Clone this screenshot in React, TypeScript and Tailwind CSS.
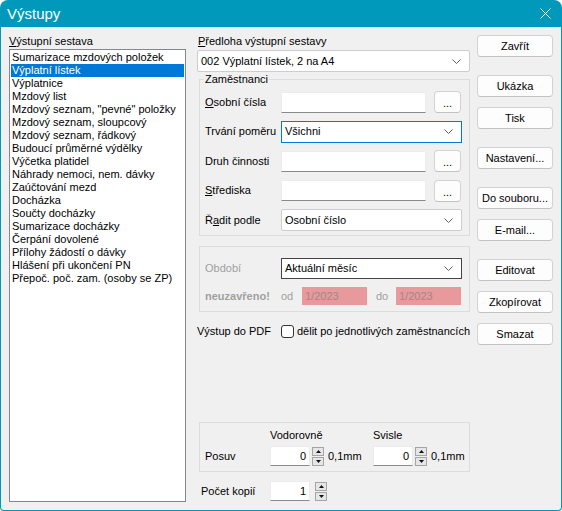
import React from "react";

const REPORTS = [
  "Sumarizace mzdových položek",
  "Výplatní lístek",
  "Výplatnice",
  "Mzdový list",
  'Mzdový seznam, "pevné" položky',
  "Mzdový seznam, sloupcový",
  "Mzdový seznam, řádkový",
  "Budoucí průměrné výdělky",
  "Výčetka platidel",
  "Náhrady nemoci, nem. dávky",
  "Zaúčtování mezd",
  "Docházka",
  "Součty docházky",
  "Sumarizace docházky",
  "Čerpání dovolené",
  "Přílohy žádostí o dávky",
  "Hlášení při ukončení PN",
  "Přepoč. poč. zam. (osoby se ZP)",
];

const BUTTONS = [
  { label: "Zavřít", cls: "mt-0" },
  { label: "Ukázka", cls: "mt-[18px]" },
  { label: "Tisk", cls: "mt-[10px]" },
  { label: "Nastavení...", cls: "mt-[18px]" },
  { label: "Do souboru...", cls: "mt-[18px]" },
  { label: "E-mail...", cls: "mt-[10px]" },
  { label: "Editovat", cls: "mt-[18px]" },
  { label: "Zkopírovat", cls: "mt-[10px]" },
  { label: "Smazat", cls: "mt-[10px]" },
];

function Chevron() {
  return (
    <svg width="9" height="5" viewBox="0 0 9 5" className="shrink-0">
      <path d="M0.5 0.5 L4.5 4.5 L8.5 0.5" fill="none" stroke="#5f5f5f" strokeWidth="1" />
    </svg>
  );
}

function Field() {
  return <div className="w-[145px] h-[21px] bg-white border border-[#ececec] border-b-[#8a8a8a]" />;
}

function Dots() {
  return (
    <div className="ml-[8px] w-[27px] h-[22px] bg-[#fdfdfd] border border-[#d3d3d3] border-b-[#c2c2c2] rounded-[4px] flex items-center justify-center leading-none pt-[3px]">
      ...
    </div>
  );
}

function Spinner({ cls }: { cls: string }) {
  return (
    <div className={"flex flex-col gap-[1px] " + cls}>
      <div className="w-[12px] h-[9px] border border-[#a5a5a5] bg-[#e6e6e6] flex items-center justify-center">
        <svg width="5" height="3" viewBox="0 0 5 3">
          <path d="M0 3 L2.5 0 L5 3 Z" fill="#111" />
        </svg>
      </div>
      <div className="w-[12px] h-[9px] border border-[#a5a5a5] bg-[#e6e6e6] flex items-center justify-center">
        <svg width="5" height="3" viewBox="0 0 5 3">
          <path d="M0 0 L2.5 3 L5 0 Z" fill="#111" />
        </svg>
      </div>
    </div>
  );
}

function NumBox({ value }: { value: string }) {
  return (
    <div className="w-[40px] h-[20px] bg-white border border-[#ececec] border-b-[#8a8a8a] flex items-center justify-end pr-[3px]">
      {value}
    </div>
  );
}

export default function App() {
  return (
    <div className="w-[562px] h-[511px] bg-[#0099bc] rounded-t-[8px] rounded-b-[4px] px-[1px] pb-[1px] flex flex-col overflow-hidden font-['Liberation_Sans',Arial,sans-serif] text-[11px] text-black">
      {/* title bar */}
      <div className="h-[27px] shrink-0 flex items-center justify-between pl-[6px] pr-[10px]">
        <span className="text-[15px] text-white leading-none">Výstupy</span>
        <svg width="11" height="11" viewBox="0 0 11 11">
          <path d="M0.5 0.5 L10.5 10.5 M10.5 0.5 L0.5 10.5" stroke="#fff" strokeWidth="1" />
        </svg>
      </div>

      <div className="flex-1 bg-[#f0f0f0] rounded-b-[3px] flex pt-[7px] pb-[8px] px-[8px]">
        {/* left: report list */}
        <div className="w-[177px] flex flex-col">
          <div className="h-[15px] leading-[15px]">
            <span className="underline">V</span>ýstupní sestava
          </div>
          <div className="flex-1 bg-white border border-[#828790] p-[1px]">
            {REPORTS.map((r, i) => (
              <div
                key={r}
                className={
                  i === 1
                    ? "h-[13px] leading-[13px] pl-[1px] whitespace-nowrap bg-[#0078d7] text-white"
                    : "h-[13px] leading-[13px] pl-[1px] whitespace-nowrap"
                }
              >
                {r}
              </div>
            ))}
          </div>
        </div>

        {/* middle: settings */}
        <div className="ml-[11px] w-[273px] flex flex-col">
          <div className="h-[15px] leading-[15px] pl-[1px]">
            <span className="underline">P</span>ředloha výstupní sestavy
          </div>
          <div className="mt-[1px] h-[22px] bg-white border border-[#cdcdcd] rounded-[2px] flex items-center justify-between pl-[3px] pr-[8px]">
            <span>002 Výplatní lístek, 2 na A4</span>
            <Chevron />
          </div>

          <fieldset className="ml-[2px] border border-[#dcdcdc] pl-[5px] pr-[4px] pt-[4px] pb-[4px]">
            <legend className="px-[1px] -ml-[1px] leading-[15px]">Zaměstnanci</legend>
            <div className="flex flex-col gap-[7.5px]">
              <div className="h-[22px] flex items-center">
                <div className="w-[76px]">
                  <span className="underline">O</span>sobní čísla
                </div>
                <Field />
                <Dots />
              </div>
              <div className="h-[22px] flex items-center">
                <div className="w-[76px]">Trvání poměru</div>
                <div className="w-[181px] h-[22px] bg-white border border-[#0078d7] flex items-center justify-between pl-[3px] pr-[8px]">
                  <span>Všichni</span>
                  <Chevron />
                </div>
              </div>
              <div className="h-[22px] flex items-center">
                <div className="w-[76px]">Druh činnosti</div>
                <Field />
                <Dots />
              </div>
              <div className="h-[22px] flex items-center">
                <div className="w-[76px]">
                  <span className="underline">S</span>třediska
                </div>
                <Field />
                <Dots />
              </div>
              <div className="h-[22px] flex items-center">
                <div className="w-[76px]">
                  Ř<span className="underline">a</span>dit podle
                </div>
                <div className="w-[181px] h-[22px] bg-white border border-[#cdcdcd] rounded-[2px] flex items-center justify-between pl-[3px] pr-[8px]">
                  <span>Osobní číslo</span>
                  <Chevron />
                </div>
              </div>
            </div>
          </fieldset>

          <div className="mt-[10px] ml-[2px] border border-[#dcdcdc] pl-[5px] pr-[4px] pt-[11px] pb-[6px] flex flex-col gap-[8px]">
            <div className="h-[21px] flex items-center">
              <div className="w-[76px] text-[#a0a0a0]">Období</div>
              <div className="w-[181px] h-[21px] bg-white border border-[#444] flex items-center justify-between pl-[3px] pr-[8px]">
                <span>Aktuální měsíc</span>
                <Chevron />
              </div>
            </div>
            <div className="h-[18px] flex items-center text-[#a0a0a0]">
              <div className="w-[76px] font-bold">neuzavřeno!</div>
              <div className="w-[21px]">od</div>
              <div className="w-[65px] h-[18px] bg-[#e8999b] text-[#9a8a8a] flex items-center pl-[3px]">1/2023</div>
              <div className="ml-[9px] w-[20px]">do</div>
              <div className="w-[65px] h-[18px] bg-[#e8999b] text-[#9a8a8a] flex items-center pl-[3px]">1/2023</div>
            </div>
          </div>

          <div className="mt-[12px] h-[14px] flex items-center">
            <div className="w-[88px]">Výstup do PDF</div>
            <div className="w-[13px] h-[13px] bg-white border border-[#333] rounded-[3px]" />
            <div className="ml-[3px] whitespace-nowrap">dělit po jednotlivých zaměstnancích</div>
          </div>

          <div className="mt-auto mb-[8px] ml-[2px] border border-[#dcdcdc] pl-[5px] pt-[4px] pb-[5px]">
            <div className="grid grid-cols-[65px_103px_1fr] grid-rows-[16px_20px] gap-y-[3px] items-center">
              <div />
              <div>Vodorovně</div>
              <div>Svisle</div>
              <div>Posuv</div>
              <div className="flex items-center">
                <NumBox value="0" />
                <Spinner cls="ml-[2px]" />
                <span className="ml-[4px]">0,1mm</span>
              </div>
              <div className="flex items-center">
                <NumBox value="0" />
                <Spinner cls="ml-[2px]" />
                <span className="ml-[4px]">0,1mm</span>
              </div>
            </div>
          </div>

          <div className="h-[22px] flex items-center pl-[4px]">
            <div className="w-[69px]">Počet kopií</div>
            <NumBox value="1" />
            <Spinner cls="ml-[5px]" />
          </div>
        </div>

        {/* right: buttons */}
        <div className="ml-[7px] w-[76px] flex flex-col pt-[1px]">
          {BUTTONS.map((b) => (
            <div
              key={b.label}
              className={
                "h-[22px] bg-[#fdfdfd] border border-[#d3d3d3] border-b-[#c2c2c2] rounded-[4px] flex items-center justify-center whitespace-nowrap " +
                b.cls
              }
            >
              {b.label}
            </div>
          ))}
        </div>
      </div>
    </div>
  );
}
